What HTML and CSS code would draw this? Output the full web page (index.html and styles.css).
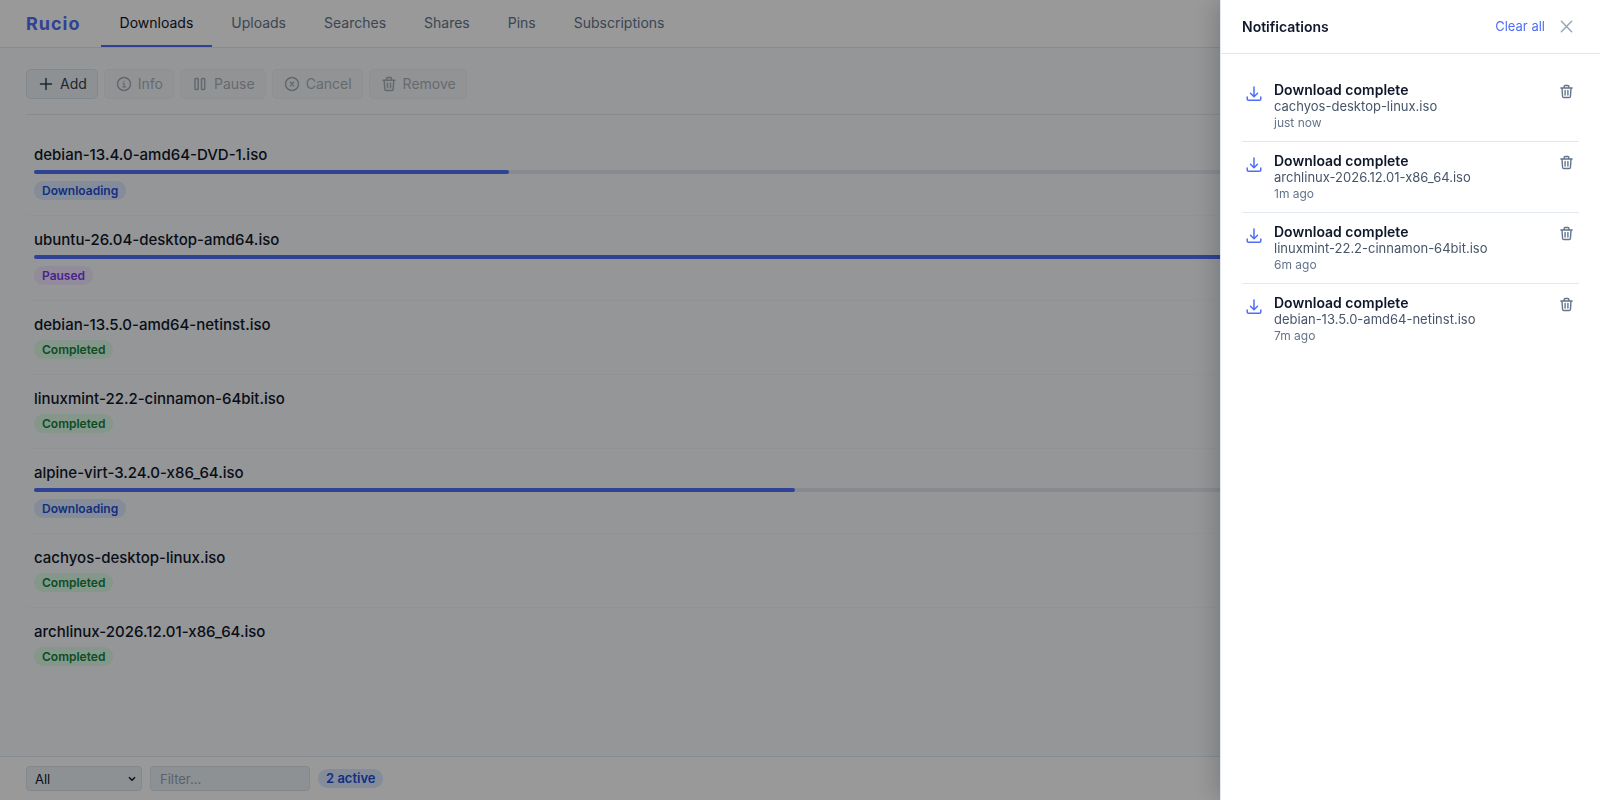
FILE: index.html
```html
<!DOCTYPE html>
<html lang="en">
<head>
<meta charset="utf-8">
<title>Rucio</title>
<link rel="stylesheet" href="styles.css">
</head>
<body>
<svg class="sprite" aria-hidden="true">
  <symbol id="i-plus" viewBox="0 0 16 16"><path d="M8 2.500v11M2.500 8h11"/></symbol>
  <symbol id="i-info" viewBox="0 0 16 16"><circle cx="8" cy="8" r="6.500"/><path stroke-width="1.200" d="M7 7.300h1.200v3.400M6.800 10.800h2.800M8 5v.4"/></symbol>
  <symbol id="i-pause" viewBox="0 0 16 16"><rect x="3" y="2.500" width="3.200" height="11" rx=".8"/><rect x="9.500" y="2.500" width="3.200" height="11" rx=".8"/></symbol>
  <symbol id="i-cancel" viewBox="0 0 16 16"><circle cx="8" cy="8" r="6.500"/><path d="M6.400 6.400l3.200 3.200M9.600 6.400L6.400 9.600"/></symbol>
  <symbol id="i-trash" viewBox="0 0 16 16"><path d="M2 4.200h12M5.500 4.200V2.600c0-.6.4-1 1-1h3c.6 0 1 .4 1 1v1.600M3.200 4.200l.6 9c.1.8.5 1.200 1.300 1.200h5.800c.8 0 1.200-.4 1.300-1.200l.6-9M6.500 7v4.800M9.500 7v4.800"/></symbol>
  <symbol id="i-download" viewBox="0 0 16 16"><path d="M8 1v9.500M4.500 7.300L8 10.800l3.500-3.500M1.200 11v2c0 .8.500 1.300 1.300 1.300h11c.8 0 1.300-.5 1.300-1.300v-2"/></symbol>
  <symbol id="i-close" viewBox="0 0 16 16"><path d="M2.500 2.500l11 11M13.500 2.500l-11 11"/></symbol>
</svg>

<div class="app">
  <header class="topbar">
    <span class="brand">Rucio</span>
    <nav class="tabs">
      <a class="tab tab-active" href="#downloads">Downloads</a>
      <a class="tab" href="#uploads">Uploads</a>
      <a class="tab" href="#searches">Searches</a>
      <a class="tab" href="#shares">Shares</a>
      <a class="tab" href="#pins">Pins</a>
      <a class="tab" href="#subscriptions">Subscriptions</a>
    </nav>
  </header>

  <main class="content">
    <div class="toolbar">
      <button class="btn" type="button"><svg class="icon"><use href="#i-plus"/></svg>Add</button>
      <button class="btn" type="button" disabled><svg class="icon"><use href="#i-info"/></svg>Info</button>
      <button class="btn" type="button" disabled><svg class="icon"><use href="#i-pause"/></svg>Pause</button>
      <button class="btn" type="button" disabled><svg class="icon"><use href="#i-cancel"/></svg>Cancel</button>
      <button class="btn" type="button" disabled><svg class="icon"><use href="#i-trash"/></svg>Remove</button>
    </div>

    <ul class="files">
      <li class="file"><div class="file-name">debian-13.4.0-amd64-DVD-1.iso</div><div class="bar"><div class="bar-fill" style="width:31%"></div></div><div class="meta"><span class="badge badge-blue">Downloading</span></div></li>
      <li class="file"><div class="file-name">ubuntu-26.04-desktop-amd64.iso</div><div class="bar"><div class="bar-fill" style="width:84%"></div></div><div class="meta"><span class="badge badge-purple">Paused</span></div></li>
      <li class="file"><div class="file-name">debian-13.5.0-amd64-netinst.iso</div><div class="meta"><span class="badge badge-green">Completed</span></div></li>
      <li class="file"><div class="file-name">linuxmint-22.2-cinnamon-64bit.iso</div><div class="meta"><span class="badge badge-green">Completed</span></div></li>
      <li class="file"><div class="file-name">alpine-virt-3.24.0-x86_64.iso</div><div class="bar"><div class="bar-fill" style="width:49.700%"></div></div><div class="meta"><span class="badge badge-blue">Downloading</span></div></li>
      <li class="file"><div class="file-name">cachyos-desktop-linux.iso</div><div class="meta"><span class="badge badge-green">Completed</span></div></li>
      <li class="file"><div class="file-name">archlinux-2026.12.01-x86_64.iso</div><div class="meta"><span class="badge badge-green">Completed</span></div></li>
    </ul>
  </main>

  <footer class="statusbar">
    <div class="select-wrap">
      <select class="field field-select" aria-label="Status"><option>All</option><option>Active</option><option>Completed</option></select>
      <svg class="chevron" viewBox="0 0 8 6" aria-hidden="true"><path d="M1 1.200l3 3 3-3"/></svg>
    </div>
    <input class="field field-text" type="text" placeholder="Filter..." aria-label="Filter">
    <span class="badge badge-blue badge-count">2 active</span>
  </footer>
</div>

<div class="backdrop"></div>

<aside class="drawer" aria-labelledby="drawer-title">
  <div class="drawer-head">
    <h2 class="drawer-title" id="drawer-title">Notifications</h2>
    <button class="link-btn" type="button">Clear all</button>
    <button class="icon-btn icon-btn-close" type="button" aria-label="Close"><svg class="icon"><use href="#i-close"/></svg></button>
  </div>
  <ul class="notes">
    <li class="note"><svg class="icon note-icon"><use href="#i-download"/></svg><div class="note-body"><div class="note-title">Download complete</div><div class="note-file">cachyos-desktop-linux.iso</div><div class="note-time">just now</div></div><button class="icon-btn" type="button" aria-label="Remove"><svg class="icon"><use href="#i-trash"/></svg></button></li>
    <li class="note"><svg class="icon note-icon"><use href="#i-download"/></svg><div class="note-body"><div class="note-title">Download complete</div><div class="note-file">archlinux-2026.12.01-x86_64.iso</div><div class="note-time">1m ago</div></div><button class="icon-btn" type="button" aria-label="Remove"><svg class="icon"><use href="#i-trash"/></svg></button></li>
    <li class="note"><svg class="icon note-icon"><use href="#i-download"/></svg><div class="note-body"><div class="note-title">Download complete</div><div class="note-file">linuxmint-22.2-cinnamon-64bit.iso</div><div class="note-time">6m ago</div></div><button class="icon-btn" type="button" aria-label="Remove"><svg class="icon"><use href="#i-trash"/></svg></button></li>
    <li class="note"><svg class="icon note-icon"><use href="#i-download"/></svg><div class="note-body"><div class="note-title">Download complete</div><div class="note-file">debian-13.5.0-amd64-netinst.iso</div><div class="note-time">7m ago</div></div><button class="icon-btn" type="button" aria-label="Remove"><svg class="icon"><use href="#i-trash"/></svg></button></li>
  </ul>
</aside>
</body>
</html>
```
FILE: styles.css
```css
:root {
  --accent: #4f6ef7;
  --text: #0f172a;
  --muted: #64748b;
  --line: #e2e8f0;
  --field: #ebf2f6;
  --field-line: #d9e3ea;
}

* { box-sizing: border-box; }

body {
  margin: 0;
  background: #f8fafc;
  color: var(--text);
  font-family: Inter, "Liberation Sans", sans-serif;
  font-size: 14px;
}

button, input, select { font-family: inherit; }
ul { list-style: none; margin: 0; padding: 0; }

.sprite { display: none; }

.icon {
  width: 16px;
  height: 16px;
  flex: none;
  fill: none;
  stroke: currentColor;
  stroke-width: 1.5;
  stroke-linecap: round;
  stroke-linejoin: round;
}

.app {
  display: flex;
  flex-direction: column;
  min-height: 100vh;
}

.topbar {
  display: flex;
  align-items: stretch;
  gap: 20px;
  height: 48px;
  padding: 0 26px;
  background: #fff;
  border-bottom: 1px solid var(--line);
}

.brand {
  align-self: center;
  color: var(--accent);
  font-size: 18px;
  font-weight: 700;
  letter-spacing: 1px;
}

.tabs { display: flex; }

.tab {
  display: flex;
  align-items: center;
  padding: 0 19px;
  border-bottom: 2px solid transparent;
  color: var(--muted);
  text-decoration: none;
}

.tab-active {
  color: var(--text);
  border-bottom-color: var(--accent);
}

.content {
  flex: 1;
  padding: 21px 26px;
}

.toolbar {
  display: flex;
  gap: 6px;
  margin-bottom: 16px;
  padding-bottom: 15px;
  border-bottom: 1px solid var(--line);
}

.btn {
  display: inline-flex;
  align-items: center;
  gap: 6px;
  height: 30px;
  padding: 0 10px 1px 11px;
  background: var(--field);
  border: 1px solid var(--field-line);
  border-radius: 5px;
  color: #334155;
  font-size: 14px;
}

.btn:disabled { opacity: .4; }

.file {
  padding: 15px 8px 13px;
  border-bottom: 1px solid #f1f5f9;
  border-radius: 6px;
}

.file:last-child { border-bottom-color: transparent; }

.file-name {
  font-size: 15px;
  font-weight: 500;
  line-height: 18px;
}

.bar {
  height: 4px;
  margin: 6px 0 7px;
  background: var(--line);
  border-radius: 2px;
}

.bar-fill {
  height: 100%;
  background: var(--accent);
  border-radius: 2px;
}

.meta {
  display: flex;
  align-items: flex-start;
  height: 21px;
  margin-top: 6px;
}

.badge {
  padding: 0 8px;
  border-radius: 10px;
  font-size: 12px;
  font-weight: 600;
  line-height: 19px;
}

.badge-blue { background: #dbeafe; color: #1d4ed8; }
.badge-purple { background: #f3e8ff; color: #7c3aed; }
.badge-green { background: #dcfce7; color: #15803d; }
.badge-count { font-size: 13px; }

.statusbar {
  display: flex;
  align-items: center;
  gap: 8px;
  height: 44px;
  padding: 0 26px;
  background: #fff;
  border-top: 1px solid var(--line);
}

.field {
  height: 25px;
  background: var(--field);
  border: 1px solid var(--field-line);
  border-radius: 4px;
  color: var(--text);
  font-size: 13px;
}

.select-wrap { position: relative; display: flex; }

.field-select {
  width: 116px;
  padding: 0 20px 0 8px;
  appearance: none;
}

.chevron {
  position: absolute;
  top: 10px;
  right: 6px;
  width: 8px;
  height: 6px;
  fill: none;
  stroke: var(--text);
  stroke-width: 1.5;
  pointer-events: none;
}

.field-text { width: 160px; padding: 0 9px; }
.field-text::placeholder { color: #94a3b8; }

.backdrop {
  position: fixed;
  inset: 0;
  background: rgba(0, 0, 0, .4);
}

.drawer {
  position: fixed;
  top: 0;
  right: 0;
  bottom: 0;
  width: 380px;
  background: #fff;
  border-left: 1px solid var(--line);
  box-shadow: -4px 0 24px rgba(0, 0, 0, .2);
}

.drawer-head {
  display: flex;
  align-items: center;
  height: 54px;
  padding: 0 21px;
  border-bottom: 1px solid var(--line);
}

.drawer-title {
  flex: 1;
  margin: 0;
  font-size: 14px;
  font-weight: 600;
}

.link-btn {
  padding: 0 0 1px;
  background: none;
  border: 0;
  color: var(--accent);
  font-size: 13px;
}

.icon-btn {
  display: flex;
  padding: 3px 5px;
  background: none;
  border: 0;
  color: var(--muted);
}

.icon-btn .icon { width: 15px; height: 15px; }
.icon-btn-close { margin-left: 9px; color: #94a3b8; }

.notes { padding: 17px 21px; }

.note {
  display: flex;
  align-items: flex-start;
  padding: 10px 0;
  border-bottom: 1px solid var(--line);
}

.note:last-child { border-bottom: 0; }

.note-icon { margin: 5px 12px 0 4px; color: var(--accent); }
.note-body { flex: 1; }
.note-title { font-size: 14px; font-weight: 600; line-height: 17px; }
.note-file { color: #475569; font-size: 13px; line-height: 16px; }
.note-time { color: var(--muted); font-size: 12px; line-height: 17px; }
```
